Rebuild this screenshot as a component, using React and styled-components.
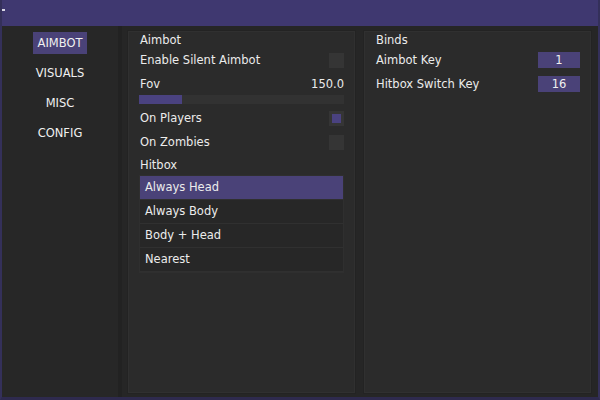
import React from "react";
import styled, { createGlobalStyle } from "styled-components";

const Global = createGlobalStyle`
  html, body { margin: 0; padding: 0; background: #2a2746; }
  body { font-family: Tahoma, "DejaVu Sans", "Liberation Sans", sans-serif; }
  #root { width: 600px; height: 400px; }
`;

const Window = styled.div`
  width: 600px;
  height: 400px;
  box-sizing: border-box;
  display: flex;
  flex-direction: column;
  background: #3e3768;
  border-left: 2px solid #34305a;
  border-right: 2px solid #34305a;
  border-bottom: 3px solid #2e2a4e;
  overflow: hidden;
`;

const TitleBar = styled.div`
  height: 26px;
  flex: none;
  background: #3f3870;
  position: relative;
`;

const Mark = styled.div`
  position: absolute;
  left: -1px;
  top: 9px;
  width: 4px;
  height: 2px;
  background: #d8d6e6;
`;

const Body = styled.div`
  flex: 1;
  display: flex;
  background: #262626;
  min-height: 0;
`;

const Sidebar = styled.div`
  width: 116px;
  flex: none;
  display: flex;
  flex-direction: column;
  align-items: center;
  gap: 8px;
  padding-top: 6px;
  background: #272727;
  border-right: 4px solid #222;
`;

const NavButton = styled.div`
  height: 22px;
  line-height: 22px;
  padding: 0 5px;
  font-size: 11.5px;
  color: #f0f0f0;
  background: ${(p) => (p.$active ? "#4a4278" : "transparent")};
`;

const Content = styled.div`
  flex: 1;
  display: grid;
  grid-template-columns: 227px 227px;
  gap: 9px;
  padding: 5px 8px 4px 6px;
  min-width: 0;
`;

const Panel = styled.div`
  background: #2b2b2b;
  border: 1px solid #303030;
  box-shadow: 0 0 0 1px #232323;
  padding: 0 10px;
  display: flex;
  flex-direction: column;
`;

const Header = styled.div`
  height: 16px;
  line-height: 16px;
  padding-left: 1px;
  font-size: 11.5px;
  color: #ececec;
  margin-top: ${(p) => p.$mt || 0}px;
`;

const Row = styled.div`
  height: ${(p) => p.$h || 24}px;
  display: flex;
  align-items: center;
  justify-content: space-between;
  padding-left: 1px;
  font-size: 11.5px;
  color: #ececec;
`;

const Check = styled.div`
  width: 15px;
  height: 15px;
  background: #353535;
  display: flex;
  align-items: center;
  justify-content: center;
  &::after {
    content: "";
    width: 9px;
    height: 9px;
    background: ${(p) => (p.$on ? "#4a4280" : "transparent")};
  }
`;

const Track = styled.div`
  height: 9px;
  background: #323232;
  margin: 0 0 2px 0;
  display: flex;
`;

const Fill = styled.div`
  background: #4a4280;
  height: 100%;
`;

const List = styled.div`
  display: flex;
  flex-direction: column;
  background: #272727;
  border: 1px solid #2f2f2f;
  margin-top: 2px;
`;

const Item = styled.div`
  height: 23px;
  line-height: 23px;
  padding-left: 5px;
  font-size: 11.5px;
  color: #ececec;
  background: ${(p) => (p.$active ? "#4a4278" : "transparent")};
  border-bottom: 1px solid #303030;
`;

const KeyBox = styled.div`
  width: 42px;
  height: 16px;
  line-height: 16px;
  text-align: center;
  background: #4a4278;
  font-size: 11.5px;
  color: #f0f0f0;
`;

export default function App() {
  const fov = 150;
  const pct = (43 / 205) * 100;
  return (
    <>
      <Global />
      <Window>
        <TitleBar>
          <Mark />
        </TitleBar>
        <Body>
          <Sidebar>
            <NavButton $active>AIMBOT</NavButton>
            <NavButton>VISUALS</NavButton>
            <NavButton>MISC</NavButton>
            <NavButton>CONFIG</NavButton>
          </Sidebar>
          <Content>
            <Panel>
              <Header>Aimbot</Header>
              <Row>
                Enable Silent Aimbot
                <Check />
              </Row>
              <Row $h={23}>
                <span>Fov</span>
                <span>{fov.toFixed(1)}</span>
              </Row>
              <Track>
                <Fill style={{ width: `${pct}%` }} />
              </Track>
              <Row>
                On Players
                <Check $on />
              </Row>
              <Row>
                On Zombies
                <Check />
              </Row>
              <Header $mt={3}>Hitbox</Header>
              <List>
                <Item $active>Always Head</Item>
                <Item>Always Body</Item>
                <Item>Body + Head</Item>
                <Item>Nearest</Item>
              </List>
            </Panel>
            <Panel>
              <Header>Binds</Header>
              <Row>
                Aimbot Key
                <KeyBox>1</KeyBox>
              </Row>
              <Row>
                Hitbox Switch Key
                <KeyBox>16</KeyBox>
              </Row>
            </Panel>
          </Content>
        </Body>
      </Window>
    </>
  );
}
